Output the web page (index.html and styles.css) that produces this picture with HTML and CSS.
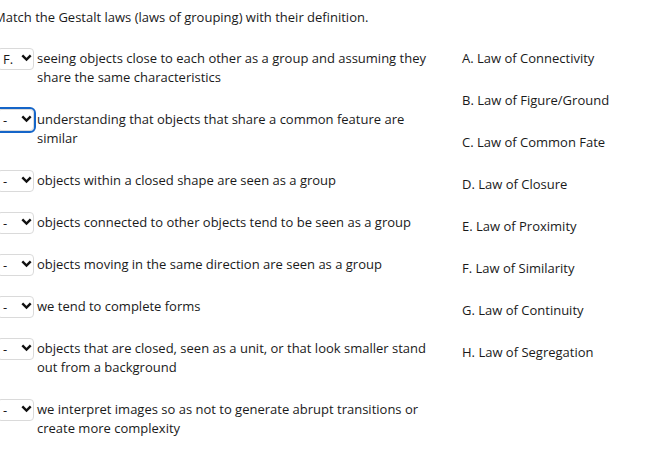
FILE: index.html
```html
<!DOCTYPE html>
<html lang="en">
<head>
    <meta charset="UTF-8">
    <meta name="viewport" content="width=device-width, initial-scale=1.0">
    <title>Gestalt laws</title>
    <link rel="stylesheet" href="styles.css">
</head>
<body>

    <div class="pregunta">
        <p class="enunciado">Match the Gestalt laws (laws of grouping) with their definition.</p>

        <div class="columnas">
            <!-- Definiciones con su selector -->
            <div class="definiciones">
                <div class="fila">
                    <span class="selector">
                        <select>
                            <option>-</option><option>A.</option><option>B.</option><option>C.</option>
                            <option>D.</option><option>E.</option><option selected>F.</option><option>G.</option><option>H.</option>
                        </select>
                        <svg class="flecha" width="11" height="8" viewBox="0 0 11 8"><path d="M1.3 1.4 5.5 5.6 9.7 1.4" fill="none" stroke="#111" stroke-width="2.4"/></svg>
                    </span>
                    <span class="texto">seeing objects close to each other as a group and assuming they share the same characteristics</span>
                </div>
                <div class="fila">
                    <span class="selector">
                        <select class="enfocado">
                            <option selected>-</option><option>A.</option><option>B.</option><option>C.</option>
                            <option>D.</option><option>E.</option><option>F.</option><option>G.</option><option>H.</option>
                        </select>
                        <svg class="flecha" width="11" height="8" viewBox="0 0 11 8"><path d="M1.3 1.4 5.5 5.6 9.7 1.4" fill="none" stroke="#111" stroke-width="2.4"/></svg>
                    </span>
                    <span class="texto">understanding that objects that share a common feature are similar</span>
                </div>
                <div class="fila">
                    <span class="selector">
                        <select>
                            <option selected>-</option><option>A.</option><option>B.</option><option>C.</option>
                            <option>D.</option><option>E.</option><option>F.</option><option>G.</option><option>H.</option>
                        </select>
                        <svg class="flecha" width="11" height="8" viewBox="0 0 11 8"><path d="M1.3 1.4 5.5 5.6 9.7 1.4" fill="none" stroke="#111" stroke-width="2.4"/></svg>
                    </span>
                    <span class="texto">objects within a closed shape are seen as a group</span>
                </div>
                <div class="fila">
                    <span class="selector">
                        <select>
                            <option selected>-</option><option>A.</option><option>B.</option><option>C.</option>
                            <option>D.</option><option>E.</option><option>F.</option><option>G.</option><option>H.</option>
                        </select>
                        <svg class="flecha" width="11" height="8" viewBox="0 0 11 8"><path d="M1.3 1.4 5.5 5.6 9.7 1.4" fill="none" stroke="#111" stroke-width="2.4"/></svg>
                    </span>
                    <span class="texto">objects connected to other objects tend to be seen as a group</span>
                </div>
                <div class="fila">
                    <span class="selector">
                        <select>
                            <option selected>-</option><option>A.</option><option>B.</option><option>C.</option>
                            <option>D.</option><option>E.</option><option>F.</option><option>G.</option><option>H.</option>
                        </select>
                        <svg class="flecha" width="11" height="8" viewBox="0 0 11 8"><path d="M1.3 1.4 5.5 5.6 9.7 1.4" fill="none" stroke="#111" stroke-width="2.4"/></svg>
                    </span>
                    <span class="texto">objects moving in the same direction are seen as a group</span>
                </div>
                <div class="fila">
                    <span class="selector">
                        <select>
                            <option selected>-</option><option>A.</option><option>B.</option><option>C.</option>
                            <option>D.</option><option>E.</option><option>F.</option><option>G.</option><option>H.</option>
                        </select>
                        <svg class="flecha" width="11" height="8" viewBox="0 0 11 8"><path d="M1.3 1.4 5.5 5.6 9.7 1.4" fill="none" stroke="#111" stroke-width="2.4"/></svg>
                    </span>
                    <span class="texto">we tend to complete forms</span>
                </div>
                <div class="fila">
                    <span class="selector">
                        <select>
                            <option selected>-</option><option>A.</option><option>B.</option><option>C.</option>
                            <option>D.</option><option>E.</option><option>F.</option><option>G.</option><option>H.</option>
                        </select>
                        <svg class="flecha" width="11" height="8" viewBox="0 0 11 8"><path d="M1.3 1.4 5.5 5.6 9.7 1.4" fill="none" stroke="#111" stroke-width="2.4"/></svg>
                    </span>
                    <span class="texto">objects that are closed, seen as a unit, or that look smaller stand out from a background</span>
                </div>
                <div class="fila">
                    <span class="selector">
                        <select>
                            <option selected>-</option><option>A.</option><option>B.</option><option>C.</option>
                            <option>D.</option><option>E.</option><option>F.</option><option>G.</option><option>H.</option>
                        </select>
                        <svg class="flecha" width="11" height="8" viewBox="0 0 11 8"><path d="M1.3 1.4 5.5 5.6 9.7 1.4" fill="none" stroke="#111" stroke-width="2.4"/></svg>
                    </span>
                    <span class="texto">we interpret images so as not to generate abrupt transitions or create more complexity</span>
                </div>
            </div>

            <!-- Opciones -->
            <ul class="opciones">
                <li>A. Law of Connectivity</li>
                <li>B. Law of Figure/Ground</li>
                <li>C. Law of Common Fate</li>
                <li>D. Law of Closure</li>
                <li>E. Law of Proximity</li>
                <li>F. Law of Similarity</li>
                <li>G. Law of Continuity</li>
                <li>H. Law of Segregation</li>
            </ul>
        </div>
    </div>

</body>
</html>
```

FILE: styles.css
```css
body {
    margin: 0;
    font-family: "Open Sans", Arial, sans-serif;
    font-size: 13px;
    line-height: 19px;
    color: #1a1a1a;
    background: #fff;
}
.pregunta {
    margin-left: -6px;
    padding-top: 8px;
}
.enunciado {
    margin: 0 0 22px 0;
}
.columnas {
    display: flex;
    gap: 25px;
}
.definiciones {
    width: 443px;
    flex-shrink: 0;
}
.fila {
    display: flex;
    gap: 3px;
    margin-bottom: 23px;
}
.selector {
    position: relative;
    flex-shrink: 0;
    width: 37px;
    height: 19px;
    margin-left: 3px;
}
.selector select {
    appearance: none;
    -webkit-appearance: none;
    display: block;
    width: 37px;
    height: 22px;
    margin-top: -1.5px;
    padding: 0 0 0 5px;
    border: 1px solid #dadada;
    border-radius: 4px;
    background: #fff;
    font-family: inherit;
    font-size: 13px;
    color: #1a1a1a;
}
.selector select.enfocado {
    outline: 2px solid #1565c8;
    outline-offset: 0;
}
.flecha {
    position: absolute;
    left: 24px;
    top: 5px;
    pointer-events: none;
}
.texto {
    flex: 1;
}
.opciones {
    list-style-type: none;
    margin: 0;
    padding: 0;
}
.opciones li {
    margin-bottom: 23px;
}
```
